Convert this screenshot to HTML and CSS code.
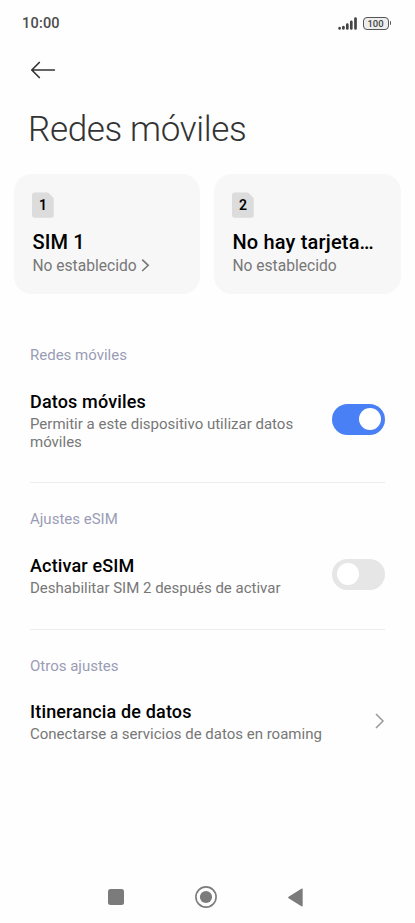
FILE: index.html
```html
<!DOCTYPE html>
<html lang="es">
<head>
<meta charset="utf-8">
<meta name="viewport" content="width=device-width, initial-scale=1">
<title>Redes móviles</title>
<link rel="stylesheet" href="styles.css">
</head>
<body>
<div class="screen">
  <header class="status">
    <span class="clock">10:00</span>
    <div class="status-icons">
      <svg class="signal" width="20" height="13" viewBox="0 0 20 13" stroke="#444" stroke-width="2.700" stroke-linecap="round"><path d="M1.600 11.400v-.2M5.400 11.400V10M9.300 11.400V7.700M13.300 11.400V4.800M17.500 11.400V1.600"/></svg>
      <span class="battery"><span class="battery-body">100</span><span class="battery-cap"></span></span>
    </div>
  </header>
  <nav class="topbar">
    <svg width="26" height="18" viewBox="0 0 26 18" fill="none" stroke="#333" stroke-width="1.700" stroke-linecap="round" stroke-linejoin="round"><path d="M24.300 9H1.800M9.300 1.500L1.800 9l7.500 7.500"/></svg>
  </nav>
  <h1 class="title">Redes móviles</h1>
  <div class="cards">
    <section class="card">
      <div class="sim"><svg class="sim-shape" width="22" height="26" viewBox="0 0 22 26"><path fill="#dcdcdc" d="M2.800.5h12.400q1 0 1.700.7l4.200 4.200q.7.7.7 1.700v15.900q0 2.800-2.800 2.800H2.800Q0 25.800 0 23V3.300Q0 .5 2.800.5z"/></svg><span>1</span></div>
      <h2 class="card-title">SIM 1</h2>
      <p class="card-sub">No establecido <svg width="9" height="14" viewBox="0 0 9 14" fill="none" stroke="#777" stroke-width="1.600"><path d="M1.200 .6L7.200 6.300l-6 5.700"/></svg></p>
    </section>
    <section class="card">
      <div class="sim"><svg class="sim-shape" width="22" height="26" viewBox="0 0 22 26"><path fill="#dcdcdc" d="M2.800.5h12.400q1 0 1.700.7l4.200 4.200q.7.7.7 1.700v15.900q0 2.800-2.800 2.800H2.800Q0 25.800 0 23V3.300Q0 .5 2.800.5z"/></svg><span>2</span></div>
      <h2 class="card-title">No hay tarjeta…</h2>
      <p class="card-sub">No establecido</p>
    </section>
  </div>
  <main class="groups">
    <section class="group group-data">
      <h3 class="label">Redes móviles</h3>
      <div class="row">
        <div class="text"><h4 class="name">Datos móviles</h4><p class="desc">Permitir a este dispositivo utilizar datos móviles</p></div>
        <span class="switch on"><span class="thumb"></span></span>
      </div>
    </section>
    <section class="group group-esim">
      <h3 class="label">Ajustes eSIM</h3>
      <div class="row">
        <div class="text"><h4 class="name">Activar eSIM</h4><p class="desc">Deshabilitar SIM 2 después de activar</p></div>
        <span class="switch"><span class="thumb"></span></span>
      </div>
    </section>
    <section class="group">
      <h3 class="label">Otros ajustes</h3>
      <div class="row">
        <div class="text wide"><h4 class="name">Itinerancia de datos</h4><p class="desc">Conectarse a servicios de datos en roaming</p></div>
        <svg class="chevron" width="10" height="16" viewBox="0 0 10 16" fill="none" stroke="#999" stroke-width="1.500"><path d="M1 1L8 8l-7 7"/></svg>
      </div>
    </section>
  </main>
  <footer class="navbar">
    <svg width="16" height="16" viewBox="0 0 16 16"><rect width="16" height="16" rx="2.500" fill="#7b7b7b"/></svg>
    <svg width="22" height="22" viewBox="0 0 22 22"><circle cx="11" cy="11" r="10.100" fill="none" stroke="#7b7b7b" stroke-width="1.600"/><circle cx="11" cy="11" r="6.100" fill="#7b7b7b"/></svg>
    <svg width="15" height="19" viewBox="0 0 15 19"><path fill="#7b7b7b" d="M.6 8.700L13.400.7q1.300-.6 1.300.7v16.200q0 1.300-1.300.7L.6 10.300q-1-.8 0-1.600z"/></svg>
  </footer>
</div>
</body>
</html>
```
FILE: styles.css
```css
* { box-sizing: border-box; margin: 0; padding: 0; }
body { background: #fefefe; font-family: Roboto, "Liberation Sans", sans-serif; color: #000; }
svg { display: block; flex: none; }
.screen { width: 415px; height: 923px; display: flex; flex-direction: column; overflow: hidden; }
.status { height: 46px; padding: 0 24px 0 22px; display: flex; justify-content: space-between; align-items: center; }
.clock { font-size: 14.500px; font-weight: 500; color: #4c4c4c; letter-spacing: .2px; }
.status-icons { display: flex; align-items: center; gap: 5px; }
.battery { display: flex; align-items: center; gap: 1px; }
.battery-body { width: 26px; height: 13px; border: 1.500px solid #555; border-radius: 4px; background: #eee; font-size: 9.500px; line-height: 11px; font-weight: 500; text-align: center; color: #444; }
.battery-cap { width: 1.500px; height: 4px; background: #555; border-radius: 0 1px 1px 0; }
.topbar { height: 48px; padding-left: 30px; display: flex; align-items: center; }
.title { height: 80px; padding: 15px 0 0 28px; font-size: 35px; line-height: 42px; font-weight: 300; letter-spacing: -.35px; color: #333; }
.cards { display: grid; grid-template-columns: 186px 187px; gap: 14px; padding: 0 14px; height: 120px; }
.card { background: #f7f7f7; border-radius: 18px; padding: 18px 18px 0 18.400px; min-width: 0; }
.sim { position: relative; width: 21px; height: 26px; display: flex; justify-content: center; font-size: 14px; line-height: 27px; font-weight: 600; }
.sim-shape { position: absolute; inset: 0; }
.sim span { position: relative; }
.card-title { margin-top: 12px; font-size: 20px; line-height: 24px; font-weight: 500; letter-spacing: .18px; white-space: nowrap; }
.card-sub { display: flex; align-items: center; gap: 4px; margin-top: 2px; font-size: 15.600px; line-height: 20px; color: #777; }
.groups { padding: 0 30px; flex: 1; }
.group { padding-top: 26px; }
.group-data { padding-top: 51px; height: 189px; border-bottom: 1px solid #ededed; }
.group-esim { height: 147px; border-bottom: 1px solid #ededed; }
.label { font-size: 15px; line-height: 20px; font-weight: 400; color: #9a9cb5; }
.row { display: flex; justify-content: space-between; align-items: center; margin-top: 26px; }
.text { width: 280px; }
.wide { width: 310px; }
.name { font-size: 18px; line-height: 22px; font-weight: 500; letter-spacing: .15px; }
.desc { font-size: 15px; line-height: 18px; color: #777; margin-top: 2px; }
.group:last-child .row { margin-top: 25px; }
.switch { width: 53px; height: 31px; margin-bottom: 4px; border-radius: 16px; background: #e6e6e6; padding: 0 4.500px; display: flex; align-items: center; }
.switch.on { background: #4a80f5; justify-content: flex-end; }
.thumb { width: 22px; height: 22px; border-radius: 50%; background: #fff; }
.chevron { margin-bottom: 2px; }
.navbar { height: 52px; padding: 0 112px 0 108px; display: flex; align-items: center; justify-content: space-between; }
```
